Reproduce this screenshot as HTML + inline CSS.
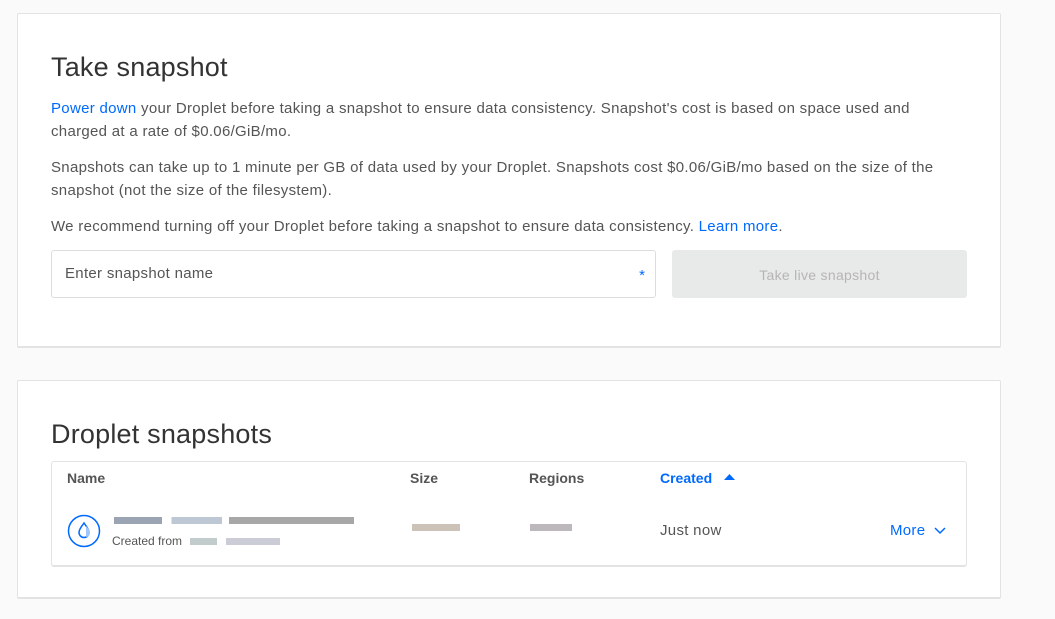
<!DOCTYPE html>
<html><head><meta charset="utf-8"><style>
*{margin:0;padding:0;box-sizing:border-box}
body{width:1055px;height:619px;background:#fafafa;font-family:"Liberation Sans",sans-serif;color:#444;position:relative;overflow:hidden}
.card{position:absolute;left:17px;width:984px;background:#fff;border:1px solid #e3e3e3;border-bottom:2px solid #e3e3e3;border-radius:2px}
h2{position:absolute;left:33px;font-size:27px;font-weight:normal;color:#333;letter-spacing:0.2px}
p{position:absolute;left:33px;width:890px;font-size:15px;line-height:23px;color:#555;letter-spacing:0.3px}
a{color:#0069ff;text-decoration:none}
.abs{position:absolute}
.px{position:absolute;height:7px}
</style></head><body>
<div class="card" style="top:13px;height:335px">
  <h2 style="top:38px">Take snapshot</h2>
  <p style="top:83px;width:870px"><a>Power down</a> your Droplet before taking a snapshot to ensure data consistency. Snapshot's cost is based on space used and charged at a rate of $0.06/GiB/mo.</p>
  <p style="top:142px">Snapshots can take up to 1 minute per GB of data used by your Droplet. Snapshots cost $0.06/GiB/mo based on the size of the snapshot (not the size of the filesystem).</p>
  <p style="top:201px">We recommend turning off your Droplet before taking a snapshot to ensure data consistency. <a>Learn more</a>.</p>
  <div class="abs" style="left:33px;top:236px;width:605px;height:48px;border:1px solid #ddd;border-radius:3px">
    <span class="abs" style="left:13px;top:14px;font-size:15px;color:#555;letter-spacing:0.3px">Enter snapshot name</span>
    <span class="abs" style="right:10px;top:16px;font-size:15px;color:#0069ff">*</span>
  </div>
  <div class="abs" style="left:654px;top:236px;width:295px;height:48px;background:#e8e9e9;border-radius:3px;text-align:center;line-height:50px;font-size:14px;color:#b5b5b5;letter-spacing:0.3px">Take live snapshot</div>
</div>
<div class="card" style="top:380px;height:219px">
  <h2 style="top:38px">Droplet snapshots</h2>
  <div class="abs" style="left:33px;top:80px;width:916px;height:106px;border:1px solid #e3e3e3;border-bottom:2px solid #e3e3e3;border-radius:3px">
    <span class="abs" style="left:15px;top:8px;font-size:14px;font-weight:bold;color:#555">Name</span>
    <span class="abs" style="left:358px;top:8px;font-size:14px;font-weight:bold;color:#555">Size</span>
    <span class="abs" style="left:477px;top:8px;font-size:14px;font-weight:bold;color:#555">Regions</span>
    <span class="abs" style="left:608px;top:8px;font-size:14px;font-weight:bold;color:#0069ff">Created</span>
    <svg class="abs" style="left:672px;top:12px" width="11" height="7"><path d="M0 6L5.5 0L11 6Z" fill="#0069ff"/></svg>
    <svg class="abs" style="left:15px;top:52px" width="34" height="34" viewBox="0 0 34 34"><circle cx="17" cy="17" r="15.5" fill="none" stroke="#0069ff" stroke-width="1.5"/><path d="M17 9C15 12 12 15 12 18.5a5 5 0 0 0 10 0C22 15 19 12 17 9Z" fill="none" stroke="#0069ff" stroke-width="1.5"/><path d="M19 12c2 2 4 4 4 7a4 4 0 0 1-4 4" fill="#9ec5ff"/></svg>
    <div class="px" style="left:62px;top:55px;width:240px;background:linear-gradient(90deg,#7a8699 0 20%,#fff 20% 24%,#a9b5c5 24% 45%,#fff 45% 48%,#8a8a8a 48% 100%);opacity:.75"></div>
    <span class="abs" style="left:60px;top:72px;font-size:12px;color:#555">Created from</span>
    <div class="px" style="left:138px;top:76px;width:90px;background:linear-gradient(90deg,#9aa 0 30%,#fff 30% 40%,#aab 40% 100%);opacity:.6"></div>
    <div class="px" style="left:360px;top:62px;width:48px;background:#b8a89a;opacity:.7"></div>
    <div class="px" style="left:478px;top:62px;width:42px;background:#a09aa0;opacity:.7"></div>
    <span class="abs" style="left:608px;top:60px;font-size:15px;color:#555;letter-spacing:0.3px">Just now</span>
    <span class="abs" style="left:838px;top:60px;font-size:15px;color:#0069ff;letter-spacing:0.3px">More</span>
    <svg class="abs" style="left:882px;top:65px" width="12" height="8"><path d="M1 1L6 6L11 1" fill="none" stroke="#0069ff" stroke-width="1.5"/></svg>
  </div>
</div>
</body></html>
